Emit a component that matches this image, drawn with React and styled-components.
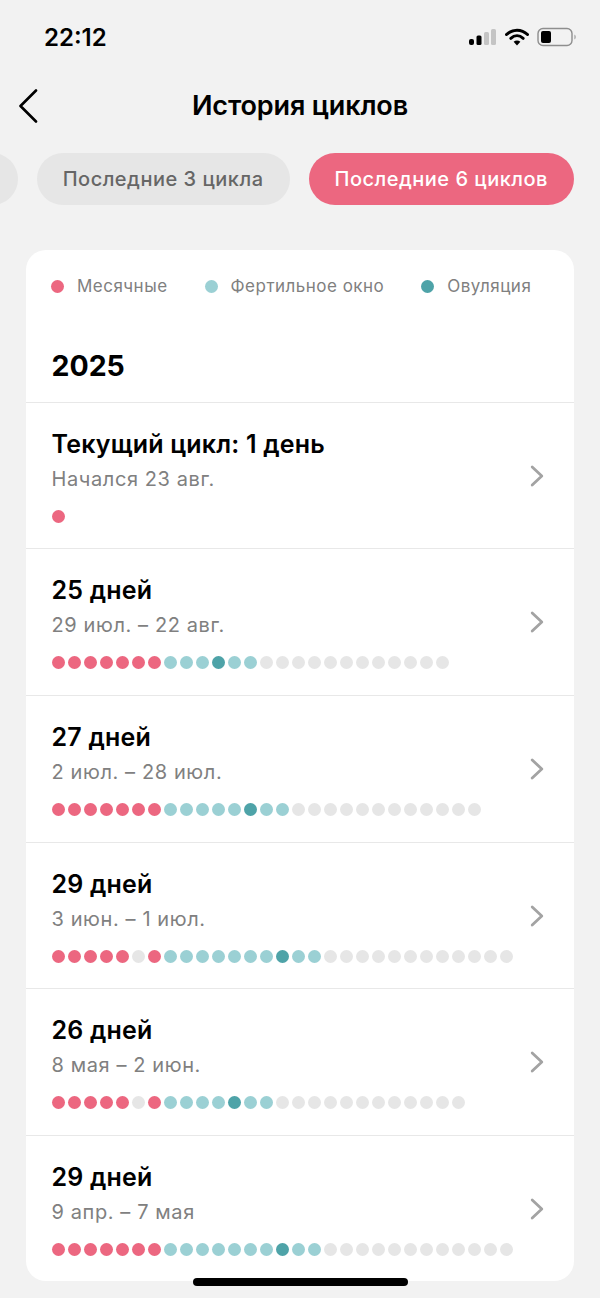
import React from 'react'
import styled, { createGlobalStyle } from 'styled-components'

const GlobalStyle = createGlobalStyle`
  html, body {
    margin: 0;
    padding: 0;
    background: #f2f2f2;
  }
  body {
    font-family: Inter, "Noto Sans", sans-serif;
    color: #000;
  }
`

const COLORS = {
  period: '#ec6780',
  fertile: '#9bd0d4',
  ovulation: '#4ea3a8',
  empty: '#e6e6e6',
}

const expand = (parts) =>
  parts.flatMap(([kind, count]) => Array(count).fill(kind))

const cycles = [
  { title: 'Текущий цикл: 1 день', dates: 'Начался 23 авг.', days: [['period', 1]] },
  {
    title: '25 дней',
    dates: '29 июл. – 22 авг.',
    days: [['period', 7], ['fertile', 3], ['ovulation', 1], ['fertile', 2], ['empty', 12]],
  },
  {
    title: '27 дней',
    dates: '2 июл. – 28 июл.',
    days: [['period', 7], ['fertile', 5], ['ovulation', 1], ['fertile', 2], ['empty', 12]],
  },
  {
    title: '29 дней',
    dates: '3 июн. – 1 июл.',
    days: [['period', 5], ['empty', 1], ['period', 1], ['fertile', 7], ['ovulation', 1], ['fertile', 2], ['empty', 12]],
  },
  {
    title: '26 дней',
    dates: '8 мая – 2 июн.',
    days: [['period', 5], ['empty', 1], ['period', 1], ['fertile', 4], ['ovulation', 1], ['fertile', 2], ['empty', 12]],
  },
  {
    title: '29 дней',
    dates: '9 апр. – 7 мая',
    days: [['period', 7], ['fertile', 7], ['ovulation', 1], ['fertile', 2], ['empty', 12]],
  },
]

const App = () => {
  return <Page>
    <GlobalStyle />
    {/* status bar */}
    <StatusBar>
      <Time>22:12</Time>
      <StatusIcons>
        <svg width='28' height='16' viewBox='0 0 28 16'>
          <rect x='0' y='10' width='5' height='6' rx='2' fill='#000' />
          <rect x='7.5' y='6.5' width='5' height='9.5' rx='1.5' fill='#000' />
          <rect x='15' y='3' width='5' height='13' rx='1.5' fill='#c4c4c4' />
          <rect x='22' y='0' width='5' height='16' rx='1.5' fill='#c4c4c4' />
        </svg>
        <svg width='24' height='18' viewBox='0 0 24 18'>
          <path d='M1.5 6.5 C7.5 0.7 16.5 0.7 22.5 6.5' fill='none' stroke='#000' strokeWidth='3' strokeLinecap='round' />
          <path d='M5.8 10.3 C9.5 7 14.5 7 18.2 10.3' fill='none' stroke='#000' strokeWidth='3' strokeLinecap='round' />
          <path d='M8.6 13.7 L12 17.5 L15.4 13.7 C13.4 12.2 10.6 12.2 8.6 13.7 Z' fill='#000' />
        </svg>
        <svg width='40' height='20' viewBox='0 0 40 20'>
          <rect x='1' y='1.5' width='34' height='17' rx='5' fill='none' stroke='#8e8e8e' strokeWidth='1.4' />
          <rect x='4' y='4' width='10' height='12' rx='2' fill='#000' />
          <path d='M37.5 7.5 C39 8.5 39 11.5 37.5 12.5 Z' fill='#8e8e8e' />
        </svg>
      </StatusIcons>
    </StatusBar>
    {/* end of status bar */}

    <Header>
      <BackButton>
        <svg width='20' height='34' viewBox='0 0 20 34'>
          <path d='M18 1.5 L2.5 17 L18 32.5' fill='none' stroke='#000' strokeWidth='2.6' strokeLinecap='round' strokeLinejoin='round' />
        </svg>
      </BackButton>
      <Title>История циклов</Title>
    </Header>

    <Chips>
      {/* first chip is scrolled away, only its right end shows */}
      <Chip $blank />
      <Chip>Последние 3 цикла</Chip>
      <Chip $active>Последние 6 циклов</Chip>
    </Chips>

    <Card>
      <Legend>
        <LegendItem><LegendDot $kind='period' />Месячные</LegendItem>
        <LegendItem><LegendDot $kind='fertile' />Фертильное окно</LegendItem>
        <LegendItem><LegendDot $kind='ovulation' />Овуляция</LegendItem>
      </Legend>
      <Year>2025</Year>
      {cycles.map((cycle, index) => {
        return <Row key={index}>
          <RowTitle>{cycle.title}</RowTitle>
          <RowDates>{cycle.dates}</RowDates>
          <Dots>
            {expand(cycle.days).map((kind, i) => {
              return <Dot key={i} $kind={kind} />
            })}
          </Dots>
          <Chevron width='14' height='22' viewBox='0 0 14 22'>
            <path d='M2.2 2 L11.8 11 L2.2 20' fill='none' stroke='#a3a3a3' strokeWidth='2.8' strokeLinecap='round' strokeLinejoin='round' />
          </Chevron>
        </Row>
      })}
    </Card>
    <HomeIndicator />
  </Page>
}

const Page = styled.div`
  position: relative;
  width: 600px;
  height: 1298px;
  overflow: hidden;
  background: #f2f2f2;
`

const StatusBar = styled.div`
  display: flex;
  align-items: center;
  justify-content: space-between;
  height: 74px;
  padding: 0 23px 0 44px;
  box-sizing: border-box;
`

const Time = styled.div`
  font-size: 24px;
  font-weight: 600;
`

const StatusIcons = styled.div`
  display: flex;
  align-items: center;
  gap: 8px;
`

const Header = styled.header`
  position: relative;
  display: flex;
  align-items: center;
  justify-content: center;
  height: 62px;
`

const BackButton = styled.div`
  position: absolute;
  left: 18px;
  top: 15px;
  display: flex;
`

const Title = styled.h1`
  margin: 0;
  font-size: 27px;
  font-weight: 600;
  letter-spacing: -0.15px;
`

const Chips = styled.div`
  display: flex;
  justify-content: flex-end;
  gap: 19px;
  margin-top: 17px;
  padding-right: 26px;
  overflow: hidden;
`

const Chip = styled.div`
  flex: none;
  display: flex;
  align-items: center;
  height: 52px;
  width: ${({ $blank }) => ($blank ? '200px' : 'auto')};
  padding: ${({ $blank }) => ($blank ? '0' : '0 26px')};
  border-radius: 26px;
  font-size: 20px;
  font-weight: 500;
  letter-spacing: 0.5px;
  white-space: nowrap;
  background: ${({ $active }) => ($active ? '#ec6780' : '#e6e6e6')};
  color: ${({ $active }) => ($active ? '#fff' : '#666')};
`

const Card = styled.section`
  width: 548px;
  height: 1031px;
  margin: 45px 0 0 26px;
  background: #fff;
  border-radius: 20px;
  overflow: hidden;
`

const Legend = styled.div`
  display: flex;
  height: 72px;
  padding: 0 0 0 25px;
  gap: 37px;
  align-items: center;
`

const LegendItem = styled.div`
  display: flex;
  align-items: center;
  gap: 13px;
  font-size: 17px;
  letter-spacing: 0.48px;
  color: #808080;
`

const LegendDot = styled.span`
  width: 13px;
  height: 13px;
  border-radius: 50%;
  background: ${({ $kind }) => COLORS[$kind]};
`

const Year = styled.div`
  height: 79.8px;
  padding: 25px 25.5px 0;
  box-sizing: border-box;
  font-size: 28.5px;
  font-weight: 700;
  line-height: 38px;
`

const Row = styled.div`
  position: relative;
  height: 146.6px;
  box-sizing: border-box;
  padding: 25px 25.5px 0;
  border-top: 1px solid #e8e8e8;
`

const RowTitle = styled.div`
  font-size: 25px;
  font-weight: 600;
  line-height: 32px;
  letter-spacing: 0.2px;
`

const RowDates = styled.div`
  margin-top: 4px;
  font-size: 20px;
  line-height: 30px;
  letter-spacing: 0.6px;
  color: #808080;
`

const Dots = styled.div`
  display: flex;
  gap: 3px;
  margin: 16px 0 0 0.5px;
`

const Dot = styled.span`
  width: 13px;
  height: 13px;
  border-radius: 50%;
  background: ${({ $kind }) => COLORS[$kind]};
`

const Chevron = styled.svg`
  position: absolute;
  right: 30px;
  top: 62px;
`

const HomeIndicator = styled.div`
  position: absolute;
  left: 193px;
  bottom: 12px;
  width: 215px;
  height: 8px;
  border-radius: 4px;
  background: #000;
`

export default App
